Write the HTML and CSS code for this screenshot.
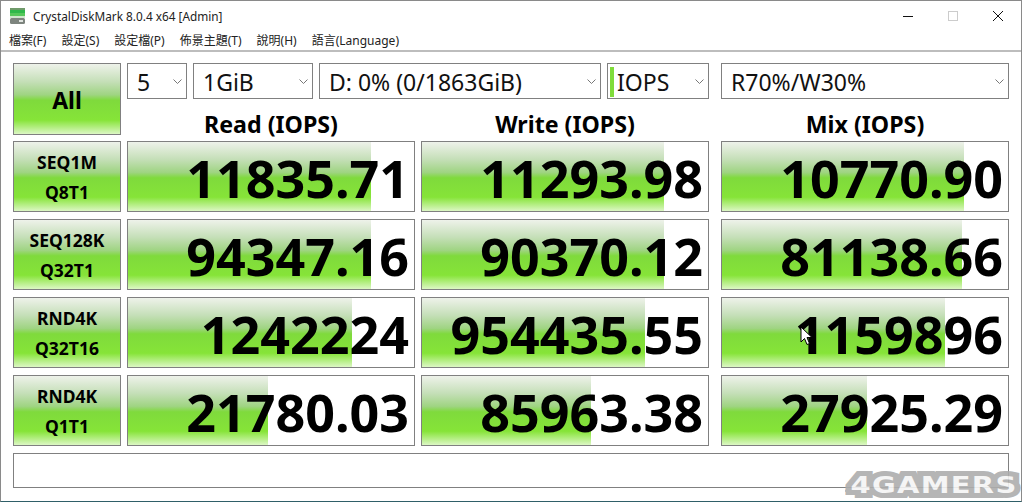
FILE: index.html
```html
<!DOCTYPE html>
<html>
<head>
<meta charset="utf-8">
<title>CrystalDiskMark</title>
<link rel="stylesheet" href="styles.css">
</head>
<body>
<div class="window">
  <header class="titlebar">
    <svg class="appicon" width="17" height="17" viewBox="0 0 17 17">
      <rect x="1" y="0" width="15" height="2" fill="#6f9a6a"/>
      <rect x="1" y="2" width="15" height="3" fill="#2fb84a"/>
      <rect x="1" y="5" width="15" height="3" fill="#55c85a"/>
      <rect x="1" y="8" width="15" height="2" fill="#cfe6cc"/>
      <rect x="1" y="10" width="15" height="6" rx="1.500" fill="#7d847e"/>
      <rect x="10" y="12" width="4" height="2" fill="#dfe3df"/>
    </svg>
    <span class="title">CrystalDiskMark 8.0.4 x64 [Admin]</span>
    <div class="winbtns">
      <svg width="12" height="12" viewBox="0 0 12 12"><path d="M1 6.500h10" stroke="#111" fill="none"/></svg>
      <svg width="12" height="12" viewBox="0 0 12 12"><rect x="1.500" y="1.500" width="9" height="9" stroke="#ccc" fill="none"/></svg>
      <svg width="12" height="12" viewBox="0 0 12 12"><path d="M1 1l10 10M11 1L1 11" stroke="#111" fill="none"/></svg>
    </div>
  </header>
  <nav class="menubar">
    <span>檔案(F)</span><span>設定(S)</span><span>設定檔(P)</span><span>佈景主題(T)</span><span>說明(H)</span><span>語言(Language)</span>
  </nav>
  <main class="content">
    <div class="grid">
      <button class="side all">All</button>
      <div class="top">
        <div class="selects">
          <div class="sel s1"><span>5</span><svg class="chev" viewBox="0 0 9 5"><path d="M.5.5l4 4 4-4" fill="none" stroke="#777"/></svg></div>
          <div class="sel s2"><span>1GiB</span><svg class="chev" viewBox="0 0 9 5"><path d="M.5.5l4 4 4-4" fill="none" stroke="#777"/></svg></div>
          <div class="sel s3"><span>D: 0% (0/1863GiB)</span><svg class="chev" viewBox="0 0 9 5"><path d="M.5.5l4 4 4-4" fill="none" stroke="#777"/></svg></div>
          <div class="sel s4"><i class="mark"></i><span>IOPS</span><svg class="chev" viewBox="0 0 9 5"><path d="M.5.5l4 4 4-4" fill="none" stroke="#777"/></svg></div>
          <div class="sel s5"><span>R70%/W30%</span><svg class="chev" viewBox="0 0 9 5"><path d="M.5.5l4 4 4-4" fill="none" stroke="#777"/></svg></div>
        </div>
        <div class="row heads">
          <div class="head">Read (IOPS)</div>
          <div class="head">Write (IOPS)</div>
          <div class="head">Mix (IOPS)</div>
        </div>
      </div>

      <button class="side">SEQ1M<br>Q8T1</button>
      <div class="row">
        <div class="cell"><i class="bar" style="width:243px"></i><b>11835.71</b></div>
        <div class="cell"><i class="bar" style="width:242px"></i><b>11293.98</b></div>
        <div class="cell"><i class="bar" style="width:242px"></i><b>10770.90</b></div>
      </div>

      <button class="side">SEQ128K<br>Q32T1</button>
      <div class="row">
        <div class="cell"><i class="bar" style="width:243px"></i><b>94347.16</b></div>
        <div class="cell"><i class="bar" style="width:242px"></i><b>90370.12</b></div>
        <div class="cell"><i class="bar" style="width:240px"></i><b>81138.66</b></div>
      </div>

      <button class="side">RND4K<br>Q32T16</button>
      <div class="row">
        <div class="cell"><i class="bar" style="width:224px"></i><b>1242224</b></div>
        <div class="cell"><i class="bar" style="width:223px"></i><b>954435.55</b></div>
        <div class="cell"><i class="bar" style="width:223px"></i><b>1159896</b></div>
      </div>

      <button class="side">RND4K<br>Q1T1</button>
      <div class="row">
        <div class="cell"><i class="bar" style="width:140px"></i><b>21780.03</b></div>
        <div class="cell"><i class="bar" style="width:169px"></i><b>85963.38</b></div>
        <div class="cell"><i class="bar" style="width:145px"></i><b>27925.29</b></div>
      </div>

      <div class="status"></div>
    </div>
    <svg class="cursor" width="13" height="20" viewBox="0 0 13 20"><path d="M1 1v15l3.500-3.500 2.500 6 2.500-1-2.500-6h5z" fill="#fff" stroke="#000" stroke-width="1"/></svg>
    <div class="watermark">4GAMERS</div>
  </main>
</div>
</body>
</html>
```
FILE: styles.css
```css
* { box-sizing: border-box; }
html, body { margin: 0; padding: 0; }
body { width: 1022px; height: 502px; overflow: hidden; background: #fff; font-family: "Open Sans", "Noto Sans", sans-serif; color: #000; }
.window { height: 502px; border: 1px solid #8a8a8a; border-bottom-color: #2f5f68; display: flex; flex-direction: column; position: relative; }
.titlebar { height: 30px; display: flex; align-items: center; padding-left: 8px; background: #fff; }
.appicon { margin-right: 7px; margin-top: 1px; }
.title { font: 11.8px "Noto Sans", "Open Sans", sans-serif; color: #222; }
.winbtns { margin-left: auto; display: flex; gap: 33px; padding-right: 17px; align-items: center; }
.winbtns svg { display: block; }
.menubar { height: 21px; display: flex; gap: 15px; align-items: center; padding-left: 8px; padding-bottom: 2px; border-bottom: 2px solid #bdbdbd; font: 12px "Noto Sans", "Noto Sans CJK TC", sans-serif; color: #222; }
.content { flex: 1; position: relative; padding: 11px 0 0 12px; }
.grid { display: grid; grid-template-columns: 108px 882px; column-gap: 6px; row-gap: 7px; grid-template-rows: 71px 71px 71px 71px 71px 35px; }
.side { border: 1px solid #808080; margin: 0; padding: 0; font: 700 17.5px/30px "Noto Sans", sans-serif; color: #000; background: linear-gradient(to bottom, #eef2ea 0%, #c5dfb8 25%, #9fd482 44%, #7fda3c 52%, #86e438 80%, #dcf7c4 100%); }
.all { font-size: 23px; height: 72px; padding-top: 2px; }
.top { display: flex; flex-direction: column; }
.selects { display: flex; gap: 6px; height: 36px; }
.sel { border: 1px solid #808080; height: 36px; display: flex; align-items: center; padding: 1px 0 0 9px; font: 23px "Noto Sans", sans-serif; color: #111; position: relative; background: #fff; }
.s1 { width: 60px; }
.s2 { width: 120px; }
.s3 { width: 282px; }
.s4 { width: 102px; padding-left: 2px; }
.s5 { width: 288px; margin-left: 6px; }
.chev { position: absolute; right: 4px; top: 15px; width: 9px; height: 5px; }
.mark { width: 4px; height: 30px; background: #7fdc3a; margin-right: 3px; display: block; }
.heads { height: 35px; }
.head { flex: 0 0 288px; font: 700 23.2px/30px "Noto Sans", sans-serif; text-align: center; padding-top: 10px; height: 40px; }
.row { display: flex; gap: 6px; }
.row > :nth-child(3) { margin-left: 6px; }
.cell { flex: 0 0 288px; border: 1px solid #808080; position: relative; height: 71px; display: flex; align-items: center; justify-content: flex-end; padding: 3px 5px 0 0; background: #fff; overflow: hidden; }
.bar { position: absolute; left: 0; top: 0; bottom: 0; background: linear-gradient(to bottom, #eef2ea 0%, #c5dfb8 25%, #9fd482 44%, #7fda3c 52%, #86e438 80%, #dcf7c4 100%); }
.cell b { position: relative; font: 700 52px/1 "Noto Sans", sans-serif; }
.status { grid-column: 1 / 3; border: 1px solid #808080; width: 996px; height: 35px; background: #fff; }
.cursor { position: absolute; left: 799px; top: 274px; }
.watermark { position: absolute; right: 3px; bottom: 4px; font: 700 23px/1 "DejaVu Sans", sans-serif; color: #f4f4f4; letter-spacing: 1px; -webkit-text-stroke: 10px #adadad; paint-order: stroke; opacity: .9; transform: scaleX(1.26); transform-origin: right center; }
```
